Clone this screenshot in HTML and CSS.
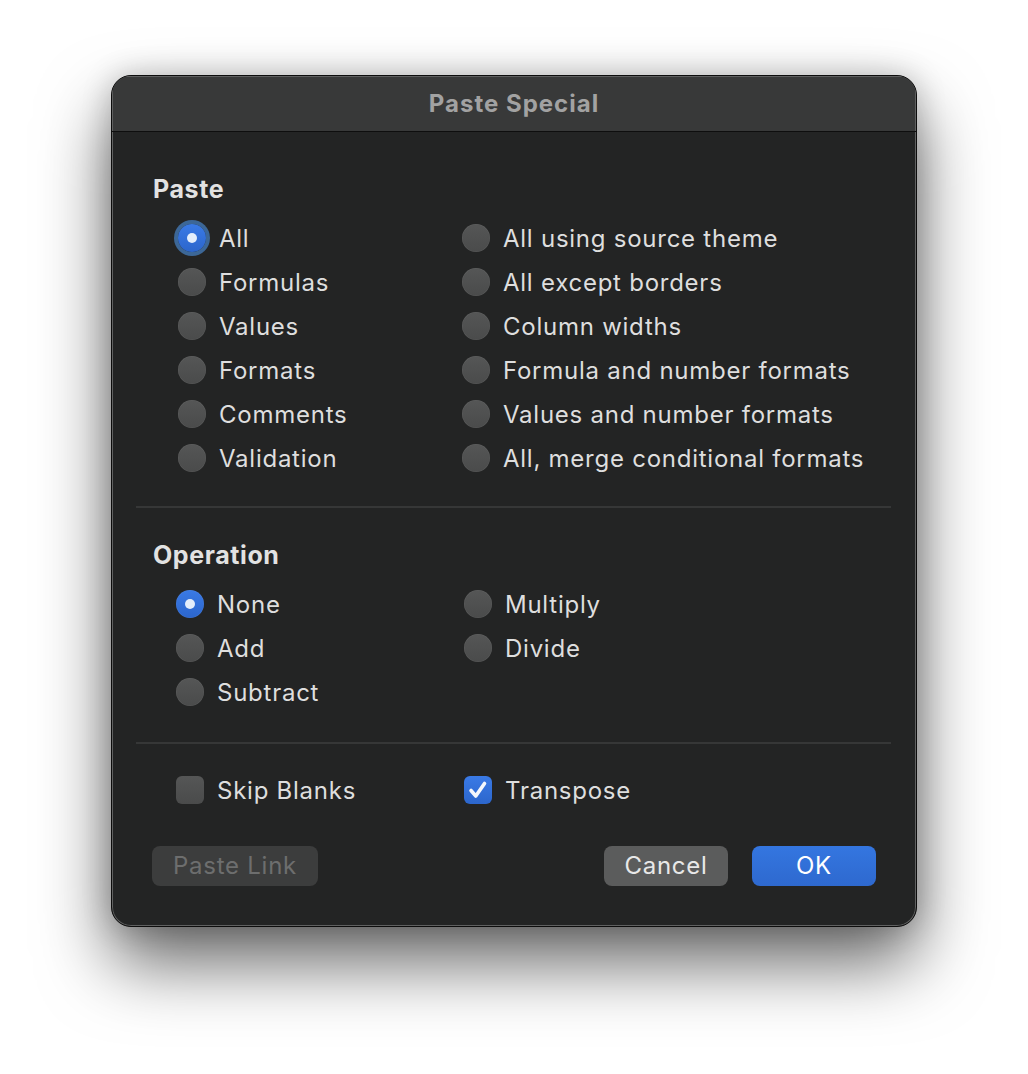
FILE: index.html
```html
<!DOCTYPE html>
<html>
<head>
<meta charset="utf-8">
<link rel="stylesheet" href="styles.css">
</head>
<body>
<div class="dialog">
  <div class="titlebar">Paste Special</div>
  <div class="content">
    <section class="section paste">
      <h2 class="heading">Paste</h2>
      <div class="grid paste-grid">
        <label class="opt"><span class="radio on focus"></span>All</label>
        <label class="opt"><span class="radio"></span>All using source theme</label>
        <label class="opt"><span class="radio"></span>Formulas</label>
        <label class="opt"><span class="radio"></span>All except borders</label>
        <label class="opt"><span class="radio"></span>Values</label>
        <label class="opt"><span class="radio"></span>Column widths</label>
        <label class="opt"><span class="radio"></span>Formats</label>
        <label class="opt"><span class="radio"></span>Formula and number formats</label>
        <label class="opt"><span class="radio"></span>Comments</label>
        <label class="opt"><span class="radio"></span>Values and number formats</label>
        <label class="opt"><span class="radio"></span>Validation</label>
        <label class="opt"><span class="radio"></span>All, merge conditional formats</label>
      </div>
    </section>
    <hr class="sep sep1">
    <section class="section op">
      <h2 class="heading">Operation</h2>
      <div class="grid op-grid">
        <label class="opt"><span class="radio on"></span>None</label>
        <label class="opt"><span class="radio"></span>Multiply</label>
        <label class="opt"><span class="radio"></span>Add</label>
        <label class="opt"><span class="radio"></span>Divide</label>
        <label class="opt"><span class="radio"></span>Subtract</label>
      </div>
    </section>
    <hr class="sep sep2">
    <div class="grid op-grid checks">
      <label class="opt"><span class="check"></span>Skip Blanks</label>
      <label class="opt"><span class="check on"><svg viewBox="0 0 28 28" width="28" height="28"><path d="M7 14.5 L11.8 20 L20.5 7.5" fill="none" stroke="#f4f7fc" stroke-width="3.6" stroke-linecap="round" stroke-linejoin="round"/></svg></span>Transpose</label>
    </div>
    <div class="buttons">
      <button class="btn disabled">Paste Link</button>
      <div class="spacer"></div>
      <button class="btn cancel">Cancel</button>
      <button class="btn ok">OK</button>
    </div>
  </div>
</div>
</body>
</html>
```
FILE: styles.css
```css
html, body {
  margin: 0;
  padding: 0;
  background: #ffffff;
}
body {
  padding: 75px 0 0 111px;
  min-height: 1074px;
  box-sizing: border-box;
  font-family: Inter, "Noto Sans", "Liberation Sans", sans-serif;
}
.dialog {
  width: 806px;
  height: 852px;
  box-sizing: border-box;
  background: #232424;
  border-radius: 20px;
  border: 1px solid #0d0d0d;
  box-shadow: inset 0 0 0 1px rgba(255,255,255,0.28), 0 36px 70px rgba(0,0,0,0.6), 0 0 30px rgba(0,0,0,0.2);
  overflow: hidden;
  display: flex;
  flex-direction: column;
}
.titlebar {
  height: 56px;
  flex: none;
  background: #383939;
  border-bottom: 1px solid #0e0e0e;
  box-shadow: inset 1px 1px 0 rgba(255,255,255,0.2), inset -1px 0 0 rgba(255,255,255,0.2);
  color: #a2a2a2;
  font-weight: 700;
  font-size: 24px;
  letter-spacing: 1px;
  display: flex;
  align-items: center;
  justify-content: center;
  padding-bottom: 1px;
  box-sizing: border-box;
}
.content {
  padding: 43px 25px 0 24px;
  color: #dedede;
  font-size: 24px;
  letter-spacing: 0.75px;
}
.heading {
  margin: 0;
  font-size: 25px;
  font-weight: 700;
  line-height: 28px;
  letter-spacing: 0.6px;
  color: #e2e2e2;
  padding-left: 17px;
}
.grid {
  display: grid;
  margin-top: 13px;
}
.paste-grid {
  grid-template-columns: 284px 1fr;
  padding-left: 42px;
}
.op-grid {
  grid-template-columns: 288px 1fr;
  padding-left: 40px;
}
.opt {
  height: 44px;
  display: flex;
  align-items: center;
  gap: 13px;
  white-space: nowrap;
}
.radio {
  width: 28px;
  height: 28px;
  border-radius: 50%;
  background: linear-gradient(#555656, #4a4b4b);
  box-shadow: inset 0 0 0 0.5px rgba(255,255,255,0.08);
  flex: none;
  position: relative;
}
.radio.on {
  background: linear-gradient(#3a7ae6, #2c66cc);
}
.radio.on::after {
  content: "";
  position: absolute;
  left: 9px;
  top: 9px;
  width: 10px;
  height: 10px;
  border-radius: 50%;
  background: #e4eefb;
}
.radio.focus {
  box-shadow: 0 0 0 4px rgba(70,125,190,0.75);
}
.sep {
  border: none;
  height: 2px;
  background: #363737;
  margin: 0;
}
.sep1 { margin-top: 26px; }
.section.op { margin-top: 33px; }
.sep2 { margin-top: 28px; }
.checks { margin-top: 24px; }
.check {
  width: 28px;
  height: 28px;
  border-radius: 6px;
  background: linear-gradient(#555656, #4a4b4b);
  flex: none;
  display: block;
}
.check.on {
  background: linear-gradient(#3a7ae6, #2c66cc);
}
.check svg { display: block; }
.buttons {
  display: flex;
  gap: 24px;
  margin-top: 34px;
  padding-left: 16px;
  padding-right: 15px;
}
.spacer { flex: 1; }
.btn {
  height: 40px;
  border: none;
  border-radius: 8px;
  font-family: inherit;
  font-size: 24px;
  letter-spacing: 0.75px;
  padding: 0;
  line-height: 40px;
}
.btn.disabled {
  width: 166px;
  background: #3c3d3d;
  color: #6d6e6e;
}
.btn.cancel {
  width: 124px;
  background: #5b5c5c;
  color: #e8e8e8;
}
.btn.ok {
  width: 124px;
  background: linear-gradient(#3476e0, #2e69cf);
  color: #ffffff;
}
```
